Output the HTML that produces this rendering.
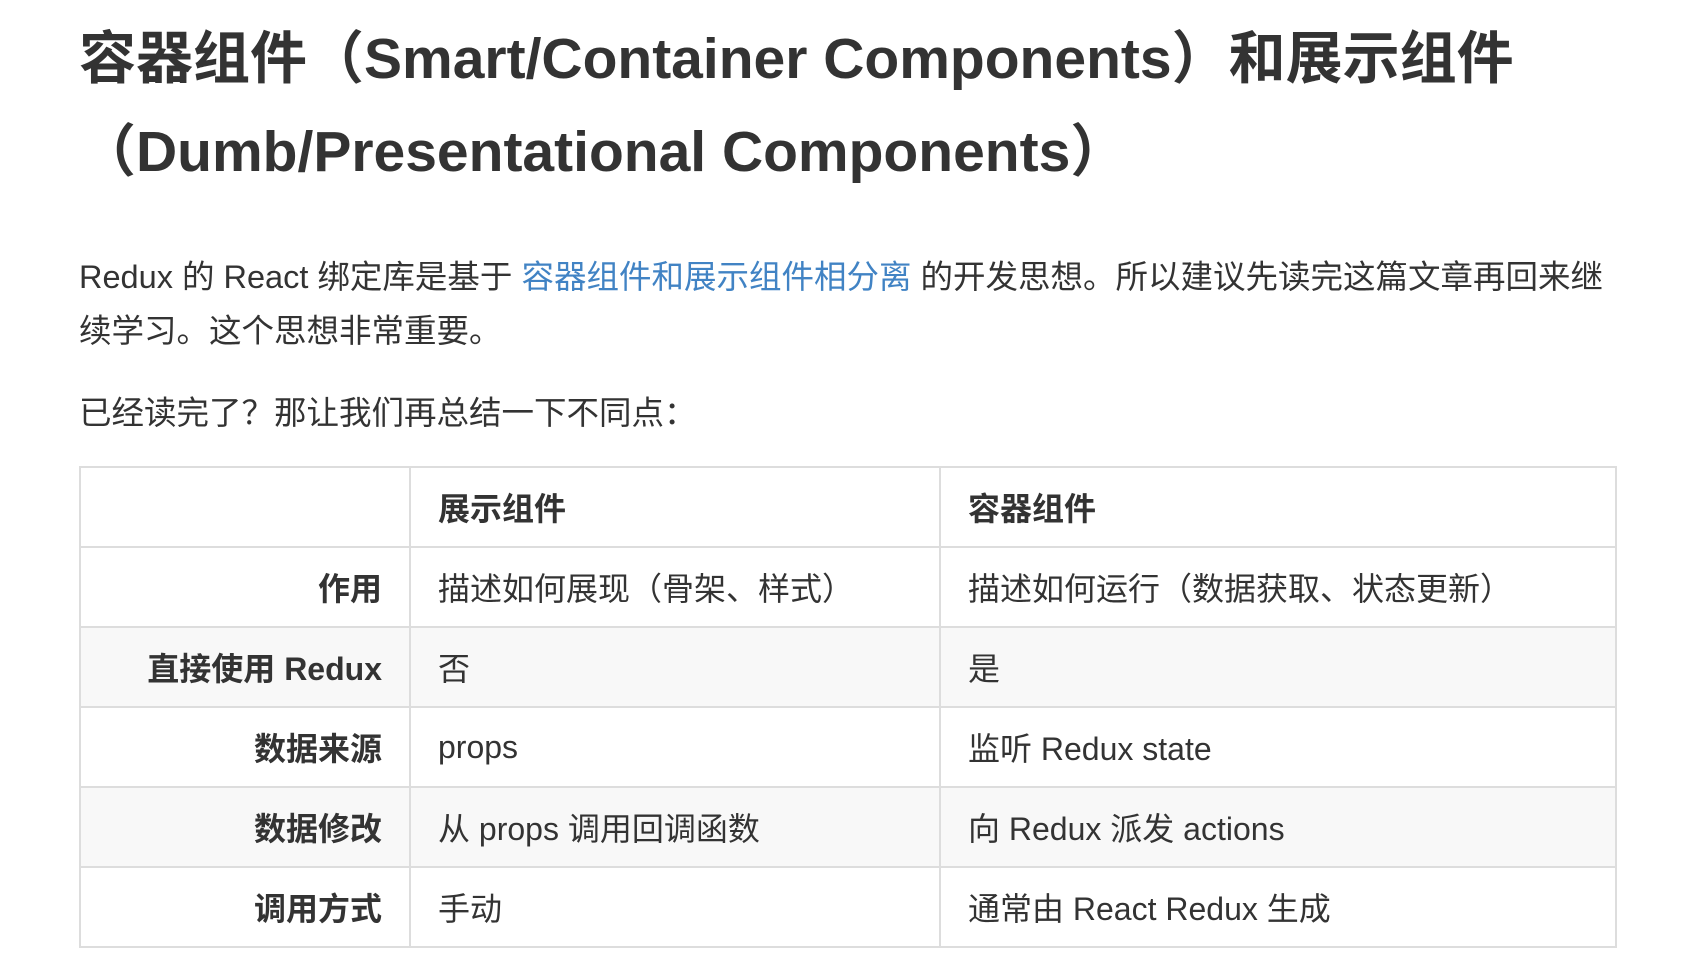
<!DOCTYPE html>
<html><head><meta charset="utf-8"><style>
html,body{margin:0;background:#fff;}
body{width:1706px;height:970px;overflow:hidden;font-family:"Liberation Sans","Noto Sans CJK SC",sans-serif;color:#333;}
h1{position:absolute;left:79px;top:13px;margin:0;font-size:57px;font-weight:bold;line-height:93px;width:1600px;}
p{position:absolute;left:79px;margin:0;font-size:32.5px;line-height:54px;width:1540px;}
a{color:#4183c4;text-decoration:none;}
table{position:absolute;left:79px;top:466px;border-collapse:collapse;font-size:32px;}
td,th{border:2px solid #ddd;height:78px;padding:0 27px;text-align:left;}
th{font-weight:bold;}
td.l{text-align:right;font-weight:bold;}
tr.e td{background:#f8f8f8;}
</style></head><body>
<h1>容器组件（Smart/Container Components）和展示组件<br>（Dumb/Presentational Components）</h1>
<p style="top:250px">Redux 的 React 绑定库是基于 <a>容器组件和展示组件相分离</a> 的开发思想。所以建议先读完这篇文章再回来继<br>续学习。这个思想非常重要。</p>
<p style="top:386px">已经读完了？那让我们再总结一下不同点：</p>
<table>
<tr><th style="width:274px"></th><th style="width:474px">展示组件</th><th style="width:620px">容器组件</th></tr>
<tr><td class="l">作用</td><td>描述如何展现（骨架、样式）</td><td>描述如何运行（数据获取、状态更新）</td></tr>
<tr class="e"><td class="l">直接使用 Redux</td><td>否</td><td>是</td></tr>
<tr><td class="l">数据来源</td><td>props</td><td>监听 Redux state</td></tr>
<tr class="e"><td class="l">数据修改</td><td>从 props 调用回调函数</td><td>向 Redux 派发 actions</td></tr>
<tr><td class="l">调用方式</td><td>手动</td><td>通常由 React Redux 生成</td></tr>
</table>
</body></html>
